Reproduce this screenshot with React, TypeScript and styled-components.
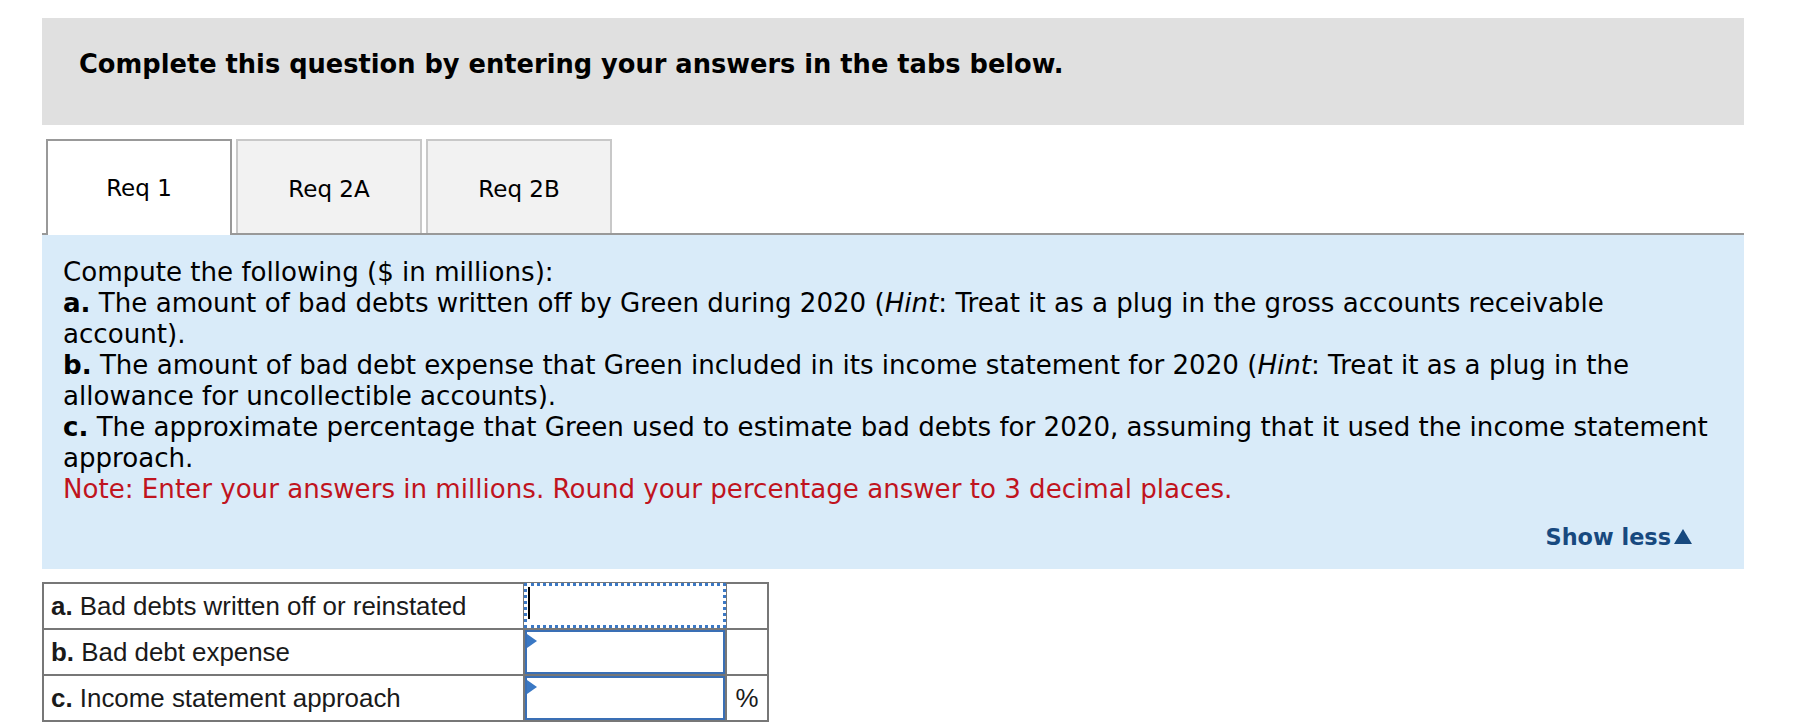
import styled, { createGlobalStyle } from "styled-components";

const GlobalStyle = createGlobalStyle`
    body {
        margin: 0;
        background: #ffffff;
        font-family: "DejaVu Sans", Verdana, sans-serif;
        color: #000000;
    }
`;

type TabProps = {
    $active?: boolean;
};

type Row = {
    letter: string;
    label: string;
    unit?: string;
    focused?: boolean;
};

// Styled Components
const Page = styled.div`
    width: 1702px;
    padding: 18px 0 0 42px;
`;

const Banner = styled.div`
    height: 107px;
    box-sizing: border-box;
    padding: 31px 37px;
    background: #e0e0e0;
    font-weight: bold;
    font-size: 25.7px;
`;

const TabBar = styled.div`
    display: flex;
    align-items: flex-start;
    gap: 4px;
    margin-top: 14px;
    padding-left: 4px;
    border-bottom: 2px solid #999999;
`;

const Tab = styled.div<TabProps>`
    width: 186px;
    height: ${(p) => (p.$active ? "96px" : "94px")};
    margin-bottom: ${(p) => (p.$active ? "-2px" : "0")};
    box-sizing: border-box;
    display: flex;
    align-items: center;
    justify-content: center;
    padding-top: ${(p) => (p.$active ? "0" : "4px")};
    border: 2px solid ${(p) => (p.$active ? "#999999" : "#c8c8c8")};
    border-bottom: none;
    background: ${(p) => (p.$active ? "#ffffff" : "#f2f2f2")};
    font-size: 23px;
    position: relative;
    z-index: ${(p) => (p.$active ? 1 : 0)};
`;

const Panel = styled.div`
    background: #d9ebf9;
    padding: 22px 22px 18px 21px;
    font-size: 26.1px;
    line-height: 31px;
`;

const Line = styled.div``;

const Note = styled.div`
    color: #c0141e;
`;

const ShowLess = styled.div`
    display: flex;
    justify-content: flex-end;
    align-items: center;
    gap: 3px;
    margin-top: 18px;
    padding-right: 30px;
    color: #17497f;
    font-weight: bold;
    font-size: 22.4px;
    line-height: 28px;
`;

const Arrow = styled.span`
    width: 0;
    height: 0;
    margin-bottom: 2px;
    border-left: 9.5px solid transparent;
    border-right: 9.5px solid transparent;
    border-bottom: 15px solid #17497f;
`;

const AnswerTable = styled.table`
    margin-top: 13px;
    border-collapse: collapse;
    font-family: "Liberation Sans", Arial, sans-serif;
    font-size: 25.9px;
    color: #1a1a1a;
`;

const LabelCell = styled.td`
    width: 472px;
    height: 44px;
    padding: 0 0 0 7px;
    border: 2px solid #777777;
    white-space: nowrap;
`;

const InputCell = styled.td`
    width: 200px;
    height: 44px;
    padding: 0;
    border: 2px solid #777777;
    position: relative;
`;

const UnitCell = styled.td`
    width: 40px;
    padding: 0;
    border: 2px solid #777777;
    text-align: center;
`;

const InputBox = styled.div<{ $focused?: boolean }>`
    position: absolute;
    inset: ${(p) => (p.$focused ? "-1px -1px 0 -1px" : "0")};
    box-sizing: border-box;
    border: ${(p) => (p.$focused ? "3px dotted #3b78c4" : "2px solid #3a6fb5")};
    background: #ffffff;
`;

const Caret = styled.span`
    position: absolute;
    left: 1px;
    top: 1px;
    width: 2px;
    height: 32px;
    background: #000000;
`;

const Flag = styled.span`
    position: absolute;
    left: 0;
    top: 2px;
    width: 0;
    height: 0;
    border-top: 7px solid transparent;
    border-bottom: 7px solid transparent;
    border-left: 10px solid #3a78c4;
`;

const rows: Row[] = [
    { letter: "a.", label: "Bad debts written off or reinstated", focused: true },
    { letter: "b.", label: "Bad debt expense" },
    { letter: "c.", label: "Income statement approach", unit: "%" },
];

export default function App() {
    return (
        <>
            <GlobalStyle />
            <Page>
                <Banner>Complete this question by entering your answers in the tabs below.</Banner>
                <TabBar>
                    <Tab $active>Req 1</Tab>
                    <Tab>Req 2A</Tab>
                    <Tab>Req 2B</Tab>
                </TabBar>
                <Panel>
                    <Line>Compute the following ($ in millions):</Line>
                    <Line>
                        <b>a.</b> The amount of bad debts written off by Green during 2020 (<i>Hint</i>: Treat
                        it as a plug in the gross accounts receivable account).
                    </Line>
                    <Line>
                        <b>b.</b> The amount of bad debt expense that Green included in its income statement for
                        2020 (<i>Hint</i>: Treat it as a plug in the allowance for uncollectible accounts).
                    </Line>
                    <Line>
                        <b>c.</b> The approximate percentage that Green used to estimate bad debts for 2020,
                        assuming that it used the income statement approach.
                    </Line>
                    <Note>Note: Enter your answers in millions. Round your percentage answer to 3 decimal places.</Note>
                    <ShowLess>
                        Show less<Arrow />
                    </ShowLess>
                </Panel>
                <AnswerTable>
                    <tbody>
                        {rows.map((row) => (
                            <tr key={row.letter}>
                                <LabelCell>
                                    <b>{row.letter}</b> {row.label}
                                </LabelCell>
                                <InputCell>
                                    <InputBox $focused={row.focused}>
                                        {row.focused ? <Caret /> : <Flag />}
                                    </InputBox>
                                </InputCell>
                                <UnitCell>{row.unit}</UnitCell>
                            </tr>
                        ))}
                    </tbody>
                </AnswerTable>
            </Page>
        </>
    );
}
